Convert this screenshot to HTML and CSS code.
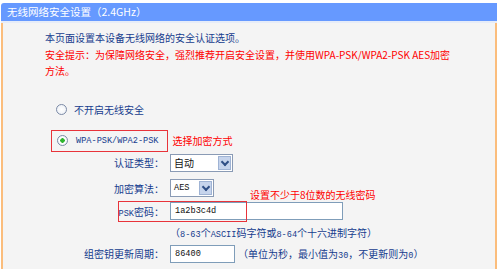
FILE: index.html
```html
<!DOCTYPE html>
<html lang="zh-CN">
<head>
  <meta charset="UTF-8">
  <title>无线网络安全设置</title>
  <link rel="stylesheet" href="styles.css">
</head>
<body>
  <div class="panel">
    <div class="title">无线网络安全设置（2.4GHz）</div>
    <div class="content">
      <div class="intro">
        <p>本页面设置本设备无线网络的安全认证选项。</p>
        <p class="warn">安全提示：为保障网络安全，强烈推荐开启安全设置，并使用WPA-PSK/WPA2-PSK AES加密<br>方法。</p>
      </div>

      <div class="option off">
        <span class="radio"></span>
        <span>不开启无线安全</span>
      </div>

      <div class="option on">
        <span class="mark">
          <span class="radio checked"></span>
          <span class="mono">WPA-PSK/WPA2-PSK</span>
        </span>
        <span class="note">选择加密方式</span>
      </div>

      <div class="form">
        <div class="row r-auth">
          <label>认证类型：</label>
          <div class="select w-auth"><span>自动</span><i class="arrow"></i></div>
        </div>
        <div class="row r-alg">
          <label>加密算法：</label>
          <div class="select w-alg"><span class="mono">AES</span><i class="arrow"></i></div>
          <span class="note tip">设置不少于8位数的无线密码</span>
        </div>
        <div class="row r-psk">
          <label><span class="mono">PSK</span>密码：</label>
          <div class="input w-psk mono">1a2b3c4d</div>
          <span class="redbox"></span>
        </div>
        <div class="row r-help">
          <label></label>
          <span>（<span class="mono">8-63</span>个<span class="mono">ASCII</span>码字符或<span class="mono">8-64</span>个十六进制字符）</span>
        </div>
        <div class="row r-group">
          <label>组密钥更新周期：</label>
          <div class="input w-group mono">86400</div>
          <span class="unit">（单位为秒，最小值为<span class="mono">30</span>，不更新则为<span class="mono">0</span>）</span>
        </div>
      </div>
    </div>
  </div>
</body>
</html>
```

FILE: styles.css
```css
body{
  margin: 0;
  padding: 0;
  background: #fff;
  font-family: "Noto Sans CJK SC", "DejaVu Sans", sans-serif;
  font-size: 10px;
  color: #163c8e;
}
p{
  margin: 0;
}
.mono{
  font-family: "Liberation Mono", "Noto Sans CJK SC", monospace;
  font-size: 8.6px;
}
.panel{
  width: 496px;
  margin: 3px 0 0 1px;
}
.title{
  height: 18px;
  line-height: 18px;
  padding-left: 6px;
  background: #6699ff;
  color: #fff;
  font-size: 10.5px;
  border-top-left-radius: 3px;
  border-bottom: 2px solid #e6ecf8;
}
.content{
  height: 246px;
  background: #f4f4f4;
  border-left: 2px solid #fbbd7c;
  border-right: 2px solid #fbbd7c;
  position: relative;
}
.intro{
  padding: 7px 0 0 42px;
  line-height: 16.5px;
}
.warn{
  color: #ff0000;
  white-space: nowrap;
}
.option{
  display: flex;
  align-items: center;
}
.option.off{
  margin-top: 22px;
  padding-left: 53px;
  height: 16px;
  gap: 7px;
}
.option.on{
  margin-top: 12px;
  padding-left: 48px;
  gap: 5px;
}
.option .mark{
  display: inline-flex;
  align-items: center;
  gap: 8px;
  height: 20px;
  padding: 0 8px 0 5px;
  border: 1px solid #e8333a;
}
.radio{
  display: inline-block;
  box-sizing: border-box;
  width: 11px;
  height: 11px;
  border: 1px solid #7b8aa6;
  border-radius: 50%;
  background: radial-gradient(circle, #fff 0, #e9edf3 100%);
}
.radio.checked{
  background: radial-gradient(circle, #2fb52f 0, #2fb52f 2px, #fff 2.5px, #e9edf3 100%);
}
.note{
  color: #ff0000;
}
.row{
  display: flex;
  align-items: center;
  gap: 6px;
  position: relative;
}
.row label{
  width: 161px;
  flex: none;
  text-align: right;
}
.r-auth{ height: 22px; }
.r-alg{ height: 25px; margin-top: 2px; }
.r-psk{ height: 21px; }
.r-help{ height: 22px; }
.r-group{ height: 20px; }
.select, .input{
  box-sizing: border-box;
  background: #fff;
  color: #111;
  display: flex;
  align-items: center;
  padding-left: 3px;
}
.select{
  height: 18px;
  border: 1px solid #8a9bb5;
  justify-content: space-between;
  padding-right: 1px;
}
.w-auth{ width: 63px; }
.w-alg{ width: 44px; }
.arrow{
  display: block;
  width: 13px;
  height: 14px;
  background: #c6d4ec;
  border: 1px solid #9fb3d4;
  box-sizing: border-box;
  position: relative;
}
.arrow::after{
  content: "";
  position: absolute;
  left: 3px;
  top: 2px;
  width: 4px;
  height: 4px;
  border-right: 2px solid #2f4f86;
  border-bottom: 2px solid #2f4f86;
  transform: rotate(45deg);
}
.input{
  height: 18px;
  border: 1px solid #7f9db9;
  padding-left: 4px;
}
.w-psk{ width: 173px; }
.w-group{ width: 65px; }
.tip{
  position: absolute;
  left: 247px;
  top: 11px;
}
.redbox{
  position: absolute;
  left: 115px;
  top: 0;
  width: 127px;
  height: 19px;
  border: 1px solid #e8333a;
}
.unit{
  margin-left: -3px;
}
```
